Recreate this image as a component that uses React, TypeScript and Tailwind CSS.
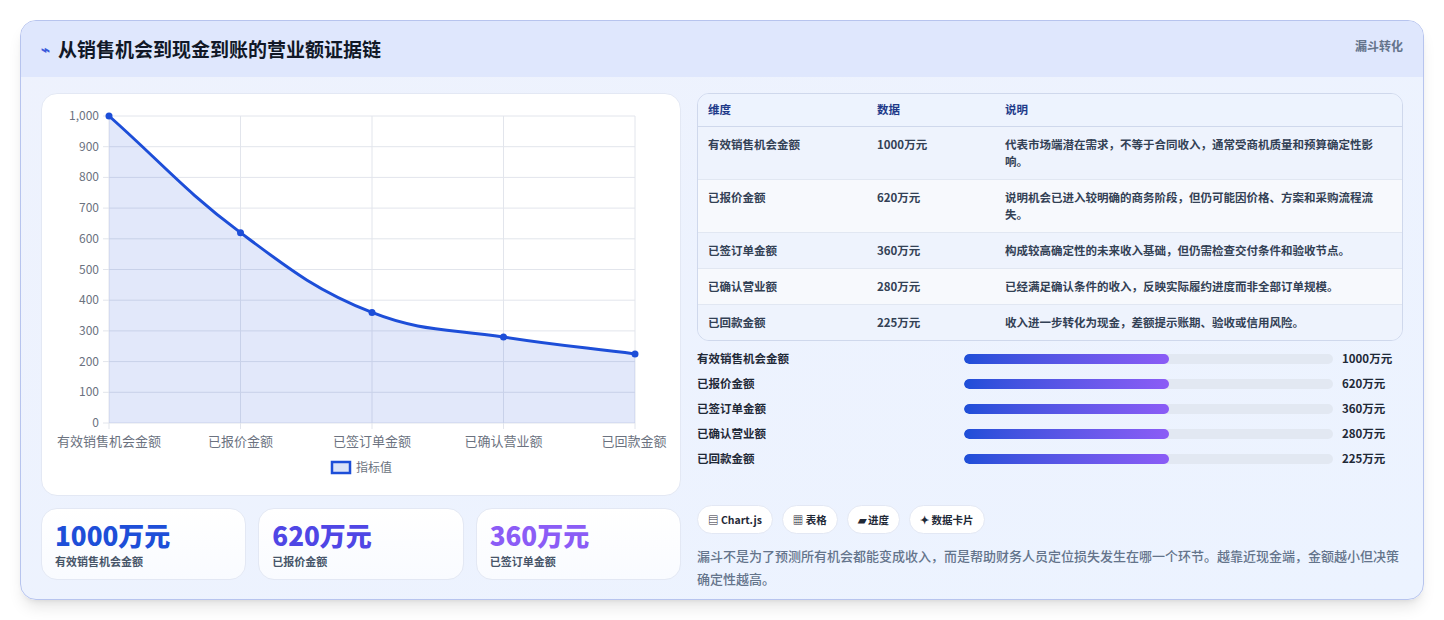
const rows = [
  { name: "有效销售机会金额", v: 1000, note: "代表市场端潜在需求，不等于合同收入，通常受商机质量和预算确定性影响。" },
  { name: "已报价金额", v: 620, note: "说明机会已进入较明确的商务阶段，但仍可能因价格、方案和采购流程流失。" },
  { name: "已签订单金额", v: 360, note: "构成较高确定性的未来收入基础，但仍需检查交付条件和验收节点。" },
  { name: "已确认营业额", v: 280, note: "已经满足确认条件的收入，反映实际履约进度而非全部订单规模。" },
  { name: "已回款金额", v: 225, note: "收入进一步转化为现金，差额提示账期、验收或信用风险。" },
];

const font = { fontFamily: '"Noto Sans CJK SC", "Noto Sans", sans-serif' };

// chart.js style spline, tension 0.4
function spline(pts: number[][]) {
  const t = 0.4;
  const cps = pts.map((cur, i) => {
    const prev = pts[i - 1] || cur;
    const next = pts[i + 1] || cur;
    const d01 = Math.hypot(cur[0] - prev[0], cur[1] - prev[1]);
    const d12 = Math.hypot(next[0] - cur[0], next[1] - cur[1]);
    let s01 = d01 / (d01 + d12 || 1);
    let s12 = d12 / (d01 + d12 || 1);
    const fa = t * s01, fb = t * s12;
    return {
      prev: [cur[0] - fa * (next[0] - prev[0]), cur[1] - fa * (next[1] - prev[1])],
      next: [cur[0] + fb * (next[0] - prev[0]), cur[1] + fb * (next[1] - prev[1])],
    };
  });
  let d = `M${pts[0][0]},${pts[0][1]}`;
  for (let i = 1; i < pts.length; i++) {
    const a = cps[i - 1].next, b = cps[i].prev;
    d += ` C${a[0]},${a[1]} ${b[0]},${b[1]} ${pts[i][0]},${pts[i][1]}`;
  }
  return d;
}

function Chart() {
  const x0 = 67, x1 = 593, y0 = 22, y1 = 329;
  const pts = rows.map((r, i) => [x0 + (i * (x1 - x0)) / 4, y1 - (r.v / 1000) * (y1 - y0)]);
  const line = spline(pts);
  return (
    <svg width="640" height="403" style={font}>
      {Array.from({ length: 11 }).map((_, i) => {
        const y = y1 - (i * (y1 - y0)) / 10;
        return (
          <g key={i}>
            <line x1={x0 - 6} x2={x1} y1={y} y2={y} stroke="#e2e5ec" />
            <text x={x0 - 10} y={y + 4} fontSize="12" fill="#6b7280" textAnchor="end">{i === 10 ? "1,000" : i * 100}</text>
          </g>
        );
      })}
      {pts.map((p, i) => (
        <g key={i}>
          <line x1={p[0]} x2={p[0]} y1={y0} y2={y1 + 6} stroke="#e2e5ec" />
          <text x={p[0]} y={y1 + 23} fontSize="13" fill="#6b7280" textAnchor="middle" dx={i === 4 ? -1 : 0}>{rows[i].name}</text>
        </g>
      ))}
      <path d={`${line} L${x1},${y1} L${x0},${y1} Z`} fill="rgba(29,78,216,0.13)" />
      <path d={line} fill="none" stroke="#1d4ed8" strokeWidth="3" />
      {pts.map((p, i) => <circle key={i} cx={p[0]} cy={p[1]} r="3.5" fill="#1d4ed8" />)}
      <rect x="290" y="368" width="18" height="11" fill="#dbe3f8" stroke="#1d4ed8" strokeWidth="2.5" />
      <text x="314" y="378" fontSize="12" fill="#6b7280">指标值</text>
    </svg>
  );
}

export default function App() {
  return (
    <div className="min-h-[620px] bg-white p-5" style={font}>
      <div className="h-[580px] rounded-2xl border border-[#b7c4ee] bg-gradient-to-br from-[#eef2fd] to-[#ecf3ff] overflow-hidden shadow-lg">
        <div className="h-[56px] bg-[#dfe7fd] flex items-center justify-between px-5">
          <div className="flex items-center gap-2">
            <span className="text-[15px] font-bold text-[#3b5bdb]">⌁</span>
            <h1 className="text-[19px] font-bold text-[#111827]">从销售机会到现金到账的营业额证据链</h1>
          </div>
          <span className="text-[12px] font-semibold text-[#64748b] self-start mt-[16px]">漏斗转化</span>
        </div>
        <div className="flex gap-4 px-5 pt-4">
          <div className="w-[640px] flex flex-col gap-3">
            <div className="h-[403px] rounded-2xl bg-white border border-[#e3e8f4]">
              <Chart />
            </div>
            <div className="grid grid-cols-3 gap-3">
              {[["1000万元", "text-[#1d4ed8]"], ["620万元", "text-[#4f46e5]"], ["360万元", "text-[#8b5cf6]"]].map(([v, c], i) => (
                <div key={i} className="h-[72px] rounded-2xl bg-gradient-to-b from-white to-[#f9fbff] border border-[#e3e8f4] px-[13px] pt-[9px]">
                  <div className={`text-[26px] font-extrabold leading-[34px] ${c}`}>{v}</div>
                  <div className="text-[11px] font-semibold text-[#475569] mt-[1px]">{rows[i].name}</div>
                </div>
              ))}
            </div>
          </div>
          <div className="flex-1 flex flex-col">
            <div className="rounded-xl border border-[#cfd8ec] overflow-hidden text-[11.5px] font-semibold text-[#334155]">
              <div className="grid grid-cols-[169px_128px_1fr] h-[33px] items-center px-[10px] bg-[#edf3fe] text-[#1e3a8a] border-b border-[#cfd8ec]">
                <span>维度</span><span>数据</span><span>说明</span>
              </div>
              {rows.map((r, i) => (
                <div key={i} className={`grid grid-cols-[169px_128px_1fr] px-[10px] py-[9px] leading-[17px] border-b last:border-b-0 border-[#e1e7f2] ${i % 2 ? "bg-[#f7f9fd]" : "bg-[#eef3fd]"}`}>
                  <span>{r.name}</span><span>{r.v}万元</span><span className="max-w-[386px]">{r.note}</span>
                </div>
              ))}
            </div>
            <div className="flex flex-col gap-[7px] mt-[9px]">
              {rows.map((r, i) => (
                <div key={i} className="flex items-center h-[18px] text-[11.5px] font-semibold text-[#1f2937]">
                  <span className="w-[267px]">{r.name}</span>
                  <div className="w-[369px] h-[10px] rounded-full bg-[#e2e8f2] overflow-hidden">
                    <div className="w-[55.5%] h-full rounded-full bg-gradient-to-r from-[#1d4ed8] to-[#8b5cf6]" />
                  </div>
                  <span className="ml-[9px] font-bold">{r.v}万元</span>
                </div>
              ))}
            </div>
            <div className="flex gap-[9px] mt-[37px]">
              {["▤ Chart.js", "▦ 表格", "▰ 进度", "✦ 数据卡片"].map((t) => (
                <span key={t} className="h-[29px] px-[10px] rounded-full bg-white border border-[#e3e8f4] flex items-center text-[10.5px] font-semibold text-[#1f2937]">{t}</span>
              ))}
            </div>
            <p className="mt-[10px] text-[13px] leading-[23px] text-[#64748b] font-medium">漏斗不是为了预测所有机会都能变成收入，而是帮助财务人员定位损失发生在哪一个环节。越靠近现金端，金额越小但决策确定性越高。</p>
          </div>
        </div>
      </div>
    </div>
  );
}
